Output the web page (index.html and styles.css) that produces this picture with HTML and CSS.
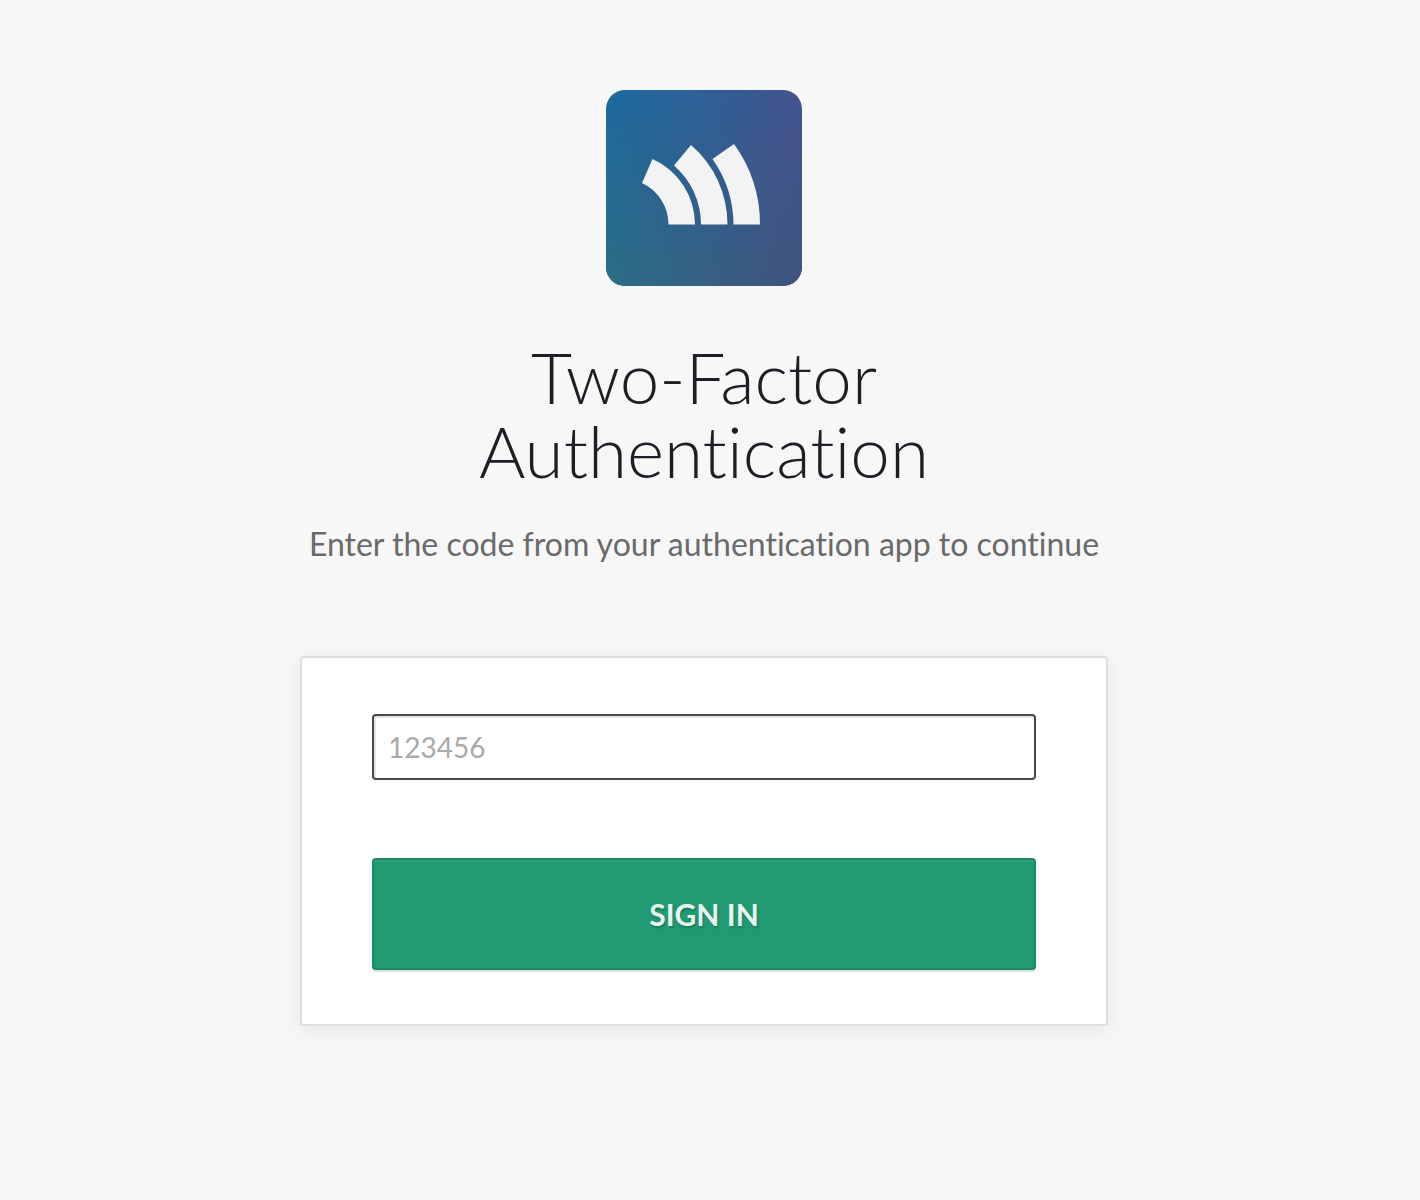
FILE: index.html
```html
<!DOCTYPE html>
<html lang="en">
<head>
<meta charset="utf-8">
<meta name="viewport" content="width=device-width, initial-scale=1">
<title>Two-Factor Authentication</title>
<link rel="stylesheet" href="styles.css">
</head>
<body>
<main class="login">
  <svg class="logo" viewBox="0 0 196 196" role="img" aria-label="Logo">
    <defs>
      <linearGradient id="top" x1="0" y1="0" x2="1" y2="0">
        <stop offset="0" stop-color="#1c6a9f"/>
        <stop offset="0.5" stop-color="#2f5f98"/>
        <stop offset="1" stop-color="#465490"/>
      </linearGradient>
      <linearGradient id="bottom" x1="0" y1="0" x2="1" y2="0">
        <stop offset="0" stop-color="#2b6e85"/>
        <stop offset="1" stop-color="#40537d"/>
      </linearGradient>
      <linearGradient id="fade" x1="0" y1="0" x2="0" y2="1">
        <stop offset="0" stop-color="#fff" stop-opacity="0"/>
        <stop offset="1" stop-color="#fff"/>
      </linearGradient>
      <mask id="blend"><rect width="196" height="196" fill="url(#fade)"/></mask>
      <clipPath id="tile"><rect width="196" height="196" rx="19"/></clipPath>
    </defs>
    <g clip-path="url(#tile)">
      <rect width="196" height="196" fill="url(#top)"/>
      <rect width="196" height="196" fill="url(#bottom)" mask="url(#blend)"/>
    </g>
    <g fill="#f3f3f3">
      <path d="M46.5 69A71.7 71.7 0 0 1 89 134.5H62.5A45.7 45.7 0 0 0 36 93Z"/>
      <path d="M85 55A104.8 104.8 0 0 1 121.5 134.5H95A78 78 0 0 0 68 75.5Z"/>
      <path d="M128 54A137.6 137.6 0 0 1 154 134.5H127.5A114.9 114.9 0 0 0 106.5 69Z"/>
    </g>
  </svg>
  <h1 class="title">Two-Factor Authentication</h1>
  <p class="subtitle">Enter the code from your authentication app to continue</p>
  <form class="card">
    <input class="code" type="text" inputmode="numeric" placeholder="123456" aria-label="Authentication code">
    <button class="submit" type="submit">SIGN IN</button>
  </form>
</main>
</body>
</html>
```
FILE: styles.css
```css
* {
  box-sizing: border-box;
}

body {
  margin: 0;
  padding: 90px 12px 90px 0;
  background: #f7f7f7;
  font-family: Lato, "Open Sans", sans-serif;
  font-variant-ligatures: none;
  color: #1e1e26;
}

.login {
  display: flex;
  flex-direction: column;
  align-items: center;
  max-width: 808px;
  margin: 0 auto;
}

.logo {
  display: block;
  width: 196px;
  height: 196px;
}

.title {
  max-width: 560px;
  margin: 54px 0 0;
  font-size: 71px;
  line-height: 74px;
  font-weight: 300;
  text-align: center;
}

.subtitle {
  margin: 36px 0 0;
  font-size: 32px;
  line-height: 40px;
  font-weight: 400;
  text-align: center;
  color: #6a6a6a;
}

.card {
  display: flex;
  flex-direction: column;
  gap: 78px;
  width: 100%;
  margin-top: 92px;
  padding: 56px 70px 54px;
  background: #fff;
  border: 2px solid #dfdfdf;
  border-radius: 4px;
  box-shadow: 0 4px 20px rgba(0, 0, 0, 0.07);
}

.code {
  width: 100%;
  height: 66px;
  padding: 0 14px;
  border: 2px solid #484848;
  border-radius: 4px;
  background: #fff;
  box-shadow: inset 2px 2px 0 #e6e6e6;
  font: 400 28px/32px Lato, "Open Sans", sans-serif;
  color: #484848;
  outline: 0;
}

.code::placeholder {
  color: #a9a9a9;
  opacity: 1;
}

.submit {
  width: 100%;
  height: 112px;
  border: 2px solid #1b8a63;
  border-radius: 4px;
  background: #209a72;
  box-shadow: inset 0 2px 2px rgba(255, 255, 255, 0.06), 0 2px 0 #dedede;
  font: 700 30px/32px Lato, "Open Sans", sans-serif;
  color: #e6f3ee;
  text-shadow: 1px 2px 2px rgba(0, 0, 0, 0.2);
  cursor: pointer;
}
```
